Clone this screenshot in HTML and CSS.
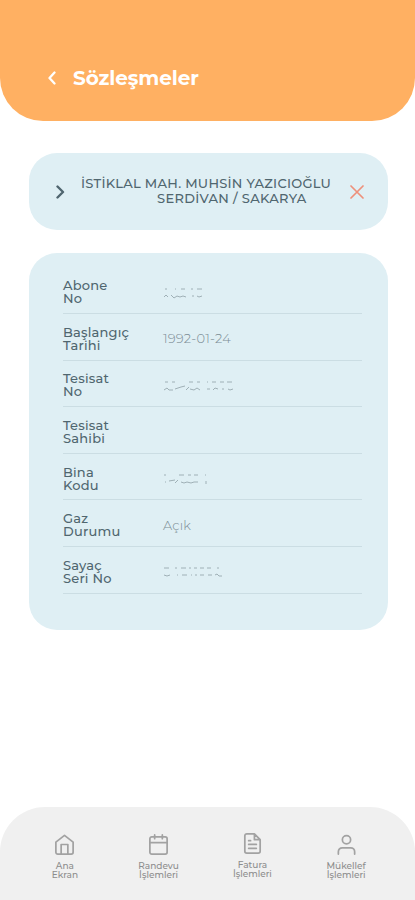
FILE: index.html
```html
<!DOCTYPE html>
<html lang="tr">
<head>
<meta charset="UTF-8">
<title>Sözleşmeler</title>
<link rel="stylesheet" href="styles.css">
</head>
<body>
<div class="wrapper">
	<header class="header">
		<svg class="back" width="8" height="14" viewBox="0 0 8 14"><path d="M6.500 1.500L1.500 7l5 5.500"/></svg>
		<h1 class="title">Sözleşmeler</h1>
	</header>

	<div class="address">
		<svg class="arrow" width="9" height="14" viewBox="0 0 9 14"><path d="M1.500 1.500L7 7l-5.500 5.500"/></svg>
		<p class="street"><span class="line">İSTİKLAL MAH. MUHSİN YAZICIOĞLU</span><span class="city">SERDİVAN / SAKARYA</span></p>
		<svg class="close" width="14" height="14" viewBox="0 0 14 14"><path d="M1 1l12 12M13 1L1 13"/></svg>
	</div>

	<div class="details">
		<div class="row">
			<div class="label">Abone<br>No</div>
			<div class="value"><svg class="mask" width="42" height="12" viewBox="0 0 42 12"><path d="M2 2h2M12 2h1M18 2h4M28 2h2M34 2h5"/><path d="M1 10l2-2 2 2M8 8l3 3 3-2 3 1 3-1 3 1M29 9h2M34 9l2 1 3-1"/></svg></div>
		</div>
		<div class="row">
			<div class="label">Başlangıç<br>Tarihi</div>
			<div class="value">1992-01-24</div>
		</div>
		<div class="row">
			<div class="label">Tesisat<br>No</div>
			<div class="value"><svg class="mask" width="72" height="12" viewBox="0 0 72 12"><path d="M2 2h3M9 2h3M26 2h4M34 2h3M44 2h1M49 2h4M57 2h4M64 2h5"/><path d="M1 10l3-2 2 2h4M12 9l6-2 4-1M23 10l3-3M27 9l4 1 3-2 3 2M44 9h3M50 10l2-2 3 1M59 9h2M65 9l2 1 3-1"/></svg></div>
		</div>
		<div class="row">
			<div class="label">Tesisat<br>Sahibi</div>
			<div class="value"></div>
		</div>
		<div class="row">
			<div class="label">Bina<br>Kodu</div>
			<div class="value"><svg class="mask" width="46" height="12" viewBox="0 0 46 12"><path d="M1 2h2M16 2h5M25 2h3M31 2h4M42 2h1"/><path d="M2 9h1M6 8l6-1M12 10l3-3M18 9l3 1 3-1 4 1 3-1 4 0M43 8v3"/></svg></div>
		</div>
		<div class="row">
			<div class="label">Gaz<br>Durumu</div>
			<div class="value">Açık</div>
		</div>
		<div class="row">
			<div class="label">Sayaç<br>Seri No</div>
			<div class="value"><svg class="mask" width="60" height="12" viewBox="0 0 60 12"><path d="M1 2h5M12 2h2M18 2h5M26 2h2M31 2h3M37 2h4M44 2h4M54 2h2"/><path d="M1 9l3 1 3-1M14 9h1M19 9h5M28 9h1M32 9h2M37 9h4M45 9h4M52 9l2-1 2 2h3"/></svg></div>
		</div>
	</div>

	<nav class="menu">
		<a class="item">
			<svg width="24" height="24" viewBox="0 0 24 24"><path d="M3 9.500L12 2.500l9 7V20a2 2 0 0 1-2 2H5a2 2 0 0 1-2-2zM8.500 22V12h7v10"/></svg>
			<span>Ana<br>Ekran</span>
		</a>
		<a class="item">
			<svg width="24" height="24" viewBox="0 0 24 24"><rect x="3" y="4" width="18" height="18" rx="2"/><path d="M8 2v4M16 2v4M3 10h18"/></svg>
			<span>Randevu<br>İşlemleri</span>
		</a>
		<a class="item bill">
			<svg width="24" height="24" viewBox="0 0 24 24"><path d="M14 2H6a2 2 0 0 0-2 2v16a2 2 0 0 0 2 2h12a2 2 0 0 0 2-2V8zM14 2v6h6M8 9h2M8 13h8M8 17h8"/></svg>
			<span>Fatura<br>İşlemleri</span>
		</a>
		<a class="item">
			<svg width="24" height="24" viewBox="0 0 24 24"><circle cx="12" cy="7" r="4.300"/><path d="M3.500 22v-2.500a4 4 0 0 1 4-4h9a4 4 0 0 1 4 4V22"/></svg>
			<span>Mükellef<br>İşlemleri</span>
		</a>
	</nav>
</div>
</body>
</html>
```
FILE: styles.css
```css
body{
	margin:0;
	background:#FFF;
	color:#50666F;
	font-family:Montserrat, Inter, "Noto Sans", sans-serif;
}
h1,p{
	margin:0;
}
svg{
	display:block;
	flex:none;
	fill:none;
	stroke:currentColor;
	stroke-width:2;
	stroke-linecap:round;
	stroke-linejoin:round;
}
.wrapper{
	display:flex;
	flex-direction:column;
	height:900px;
}
.header{
	display:flex;
	align-items:center;
	box-sizing:border-box;
	height:121px;
	padding:35px 0 0 48px;
	border-radius:0 0 43px 43px;
	background:#FFB062;
	color:#FFF;
}
.back{
	stroke-width:2.3;
}
.title{
	margin-left:17px;
	font-size:20px;
	line-height:24px;
	font-weight:700;
	letter-spacing:-.1px;
}
.address{
	display:flex;
	align-items:center;
	box-sizing:border-box;
	height:77px;
	margin:32px 27px 0 29px;
	padding:0 24px 0 27px;
	border-radius:28px;
	background:#DFEFF4;
}
.arrow{
	margin-top:1px;
	stroke-width:2.4;
}
.street{
	flex:1;
	margin:-2px 0 0 16px;
	font-size:13px;
	line-height:15px;
	font-weight:500;
	white-space:nowrap;
}
.line,
.city{
	display:block;
	letter-spacing:.27px;
}
.city{
	padding-left:76px;
	letter-spacing:.32px;
}
.close{
	color:#EE907B;
	stroke-width:1.7;
}
.details{
	box-sizing:border-box;
	height:377px;
	margin:23px 27px 0 29px;
	padding:14.400px 26px 0 34px;
	border-radius:28px;
	background:#DFEFF4;
}
.row{
	display:flex;
	align-items:center;
	box-sizing:border-box;
	height:46.600px;
	border-bottom:1px solid #CBDDE3;
}
.label{
	width:100px;
	padding-top:4px;
	font-size:13px;
	line-height:13px;
	font-weight:500;
	letter-spacing:.2px;
}
.value{
	padding-top:3px;
	color:#7C8D94;
	font-size:13px;
	line-height:16px;
	font-weight:300;
	letter-spacing:.2px;
}
.mask{
	margin-top:2px;
	color:#9FB0B6;
	stroke-width:1;
	stroke-linecap:butt;
}
.menu{
	display:flex;
	box-sizing:border-box;
	height:93px;
	margin-top:auto;
	padding:26px 22px 0 18px;
	border-radius:45px 45px 0 0;
	background:#F0F0F0;
	color:#A2A2A2;
}
.item{
	display:flex;
	flex:1;
	flex-direction:column;
	align-items:center;
	font-size:9px;
	line-height:9px;
	font-weight:500;
	text-align:center;
}
.item svg{
	width:23px;
	height:23px;
	margin-bottom:5px;
	stroke-width:1.800;
}
.item span{
	color:#8D8D8D;
}
.bill{
	margin-top:-1px;
}
```
